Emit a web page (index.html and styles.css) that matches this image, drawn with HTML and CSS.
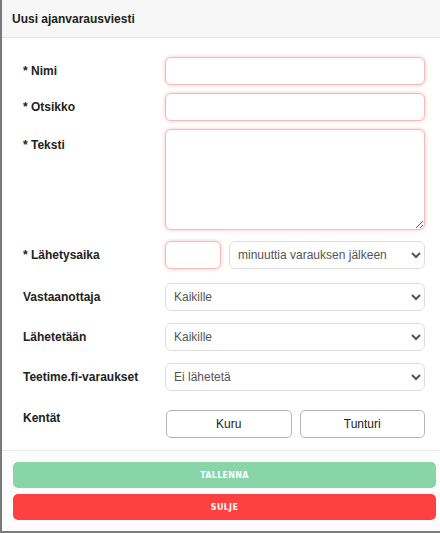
FILE: index.html
```html
<!DOCTYPE html>
<html lang="fi">
<head>
    <meta charset="UTF-8">
    <meta name="viewport" content="width=device-width, initial-scale=1.0">
    <title>Uusi ajanvarausviesti</title>
    <link rel="stylesheet" href="styles.css">
</head>
<body>
    <div class="modal">
        <div class="modal-header">Uusi ajanvarausviesti</div>

        <div class="modal-body">
            <div class="row row-tight">
                <label for="name">* Nimi</label>
                <input type="text" id="name" class="required">
            </div>
            <div class="row row-tight">
                <label for="title">* Otsikko</label>
                <input type="text" id="title" class="required">
            </div>
            <div class="row row-text">
                <label for="text">* Teksti</label>
                <textarea id="text" class="required"></textarea>
            </div>
            <div class="row row-time">
                <label for="time">* Lähetysaika</label>
                <div class="time-group">
                    <input type="text" id="time" class="required time-input">
                    <select id="timeUnit">
                        <option>minuuttia varauksen jälkeen</option>
                        <option>minuuttia ennen varausta</option>
                    </select>
                </div>
            </div>
            <div class="row">
                <label for="receiver">Vastaanottaja</label>
                <select id="receiver">
                    <option>Kaikille</option>
                </select>
            </div>
            <div class="row">
                <label for="sendTo">Lähetetään</label>
                <select id="sendTo">
                    <option>Kaikille</option>
                </select>
            </div>
            <div class="row row-last">
                <label for="teetime">Teetime.fi-varaukset</label>
                <select id="teetime">
                    <option>Ei lähetetä</option>
                </select>
            </div>
            <div class="row">
                <label class="label-top">Kentät</label>
                <div class="course-group">
                    <button class="course-btn">Kuru</button>
                    <button class="course-btn">Tunturi</button>
                </div>
            </div>
        </div>

        <div class="modal-footer">
            <button class="btn btn-save">Tallenna</button>
            <button class="btn btn-close">Sulje</button>
        </div>
    </div>
</body>
</html>
```

FILE: styles.css
```css
* {
    box-sizing: border-box;
}
body {
    margin: 0;
    font-family: "Liberation Sans", Arial, sans-serif;
    background: #fff;
}
.modal {
    width: 440px;
    height: 533px;
    border-left: 2px solid #7a7a7a;
    border-bottom: 2px solid #7a7a7a;
    display: flex;
    flex-direction: column;
    overflow: hidden;
}
.modal-header {
    height: 38px;
    padding: 12px 0 0 10px;
    background: #f7f7f7;
    border-bottom: 1px solid #e6e6e6;
    font-size: 12px;
    font-weight: bold;
    color: #222;
}
.modal-body {
    flex: 1;
    padding: 19px 15px 0 21px;
}
.row {
    display: flex;
    align-items: center;
    margin-bottom: 12px;
}
.row label {
    width: 142px;
    flex-shrink: 0;
    font-size: 12px;
    font-weight: bold;
    color: #222;
}
.row-tight {
    margin-bottom: 8px;
}
.row-text {
    align-items: flex-start;
    margin-bottom: 11px;
}
.row-text label {
    padding-top: 9px;
}
.row-time {
    margin-bottom: 14px;
}
.row-last {
    margin-bottom: 19px;
}
.label-top {
    align-self: flex-start;
    padding-top: 1px;
}
input, select, textarea {
    flex: 1;
    height: 28px;
    border-radius: 6px;
    font-family: "Liberation Sans", Arial, sans-serif;
    font-size: 12px;
    background: #fff;
}
.required {
    border: 1px solid #f3bcbc;
    box-shadow: 0 0 3px 1px rgba(255, 120, 120, 0.3);
    outline: none;
}
textarea {
    height: 101px;
    resize: vertical;
}
select {
    border: 1px solid #dedede;
    color: #555;
    padding: 0 4px;
}
.time-group {
    flex: 1;
    display: flex;
    gap: 8px;
}
.time-input {
    flex: none;
    width: 56px;
}
.course-group {
    flex: 1;
    display: flex;
    gap: 8px;
    padding-left: 1px;
}
.course-btn {
    flex: 1;
    height: 28px;
    background: #fff;
    border: 1px solid #b5b5b5;
    border-radius: 5px;
    font-family: "Liberation Sans", Arial, sans-serif;
    font-size: 12px;
    color: #222;
}
.modal-footer {
    border-top: 1px solid #ececec;
    background: #fcfcfd;
    padding: 11px 4px 11px 11px;
    display: flex;
    flex-direction: column;
    gap: 6px;
}
.btn {
    height: 26px;
    border: none;
    border-radius: 5px;
    color: #fff;
    font-family: "DejaVu Sans", Verdana, sans-serif;
    font-size: 8px;
    font-weight: bold;
    text-transform: uppercase;
    letter-spacing: 0.3px;
}
.btn-save {
    background: #88d5aa;
}
.btn-close {
    background: #ff4040;
}
```
